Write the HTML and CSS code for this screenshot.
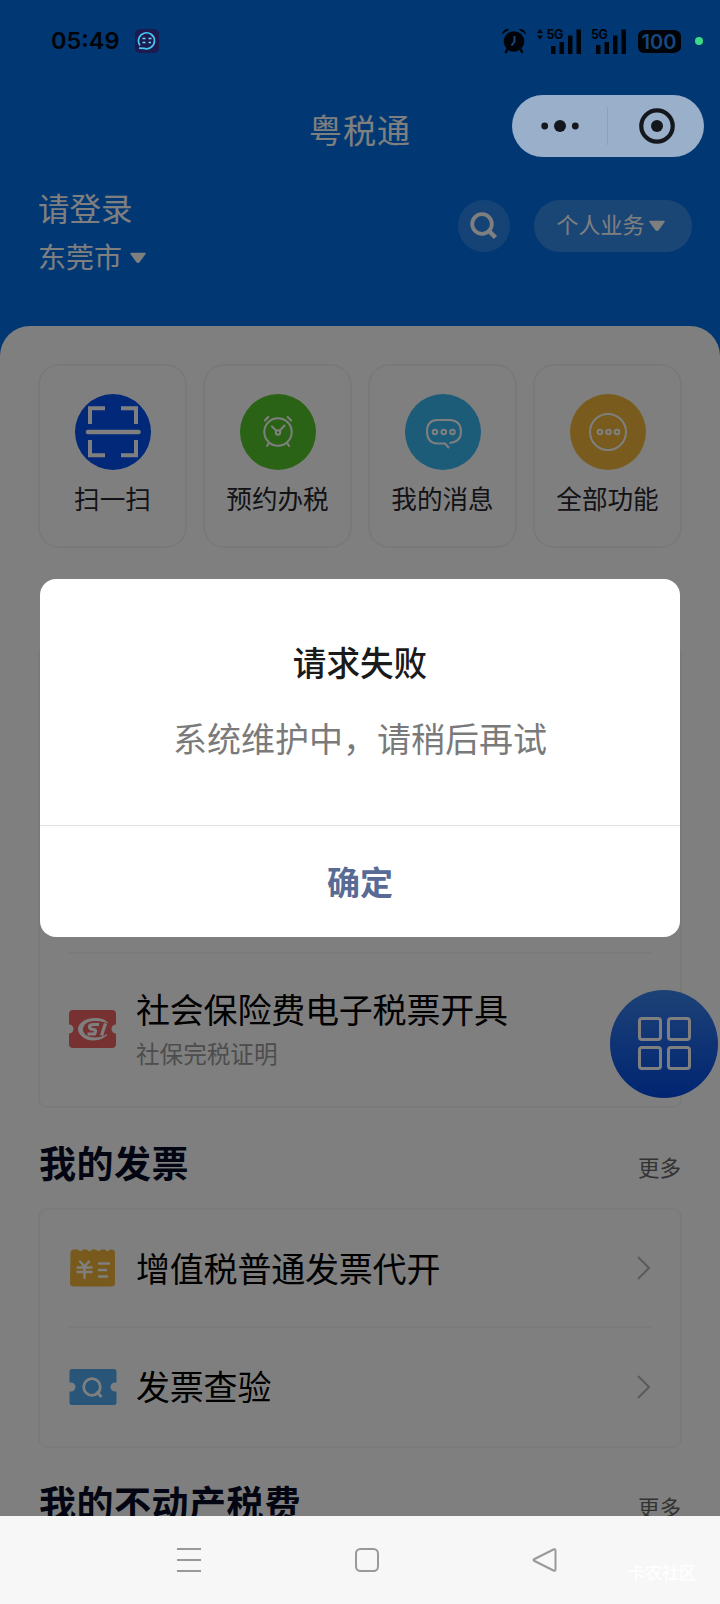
FILE: index.html
```html
<!DOCTYPE html>
<html lang="zh-CN">
<head>
<meta charset="utf-8">
<title>粤税通</title>
<link rel="stylesheet" href="styles.css">
</head>
<body>
<div class="phone">
  <header class="status">
    <span class="time">05:49</span>
    <svg class="app-badge" width="24" height="24" viewBox="0 0 24 24"><rect width="24" height="24" rx="5" fill="#1c1a4e"/><path d="M5 16.500A8 8 0 1 1 9 19.400L4 19.200" fill="none" stroke="#43c6f5" stroke-width="1.700"/><path d="M7.500 9.500h3M13.500 9.500h3M7.500 13.500h3M13.500 13.500h2.500" stroke="#6fd8f8" stroke-width="1.600"/></svg>
    <div class="status-right">
      <svg class="alarm" width="24" height="26" viewBox="0 0 24 26"><circle cx="12" cy="13.500" r="10.300"/><path d="M0.500 5.500Q2 1 6.500 1.500zM23.500 5.500Q22 1 17.500 1.500z" stroke="#000409" stroke-width="1"/><path d="M5.500 21l-2 4M18.500 21l2 4" stroke="#000409" stroke-width="2.400"/><path d="M12.500 8v5.500l-3 4" fill="none" stroke="#174980" stroke-width="2"/></svg>
      <svg class="signal-a" width="46" height="26" viewBox="0 0 46 26"><path d="M0 5L3 1l3 4zM0 7.500l3 4 3-4z"/><path d="M14 18h4.500v8H14zM22.500 14h4.500v12h-4.500zM31 7.500h4.500V26H31zM39.500 1.500H44V26h-4.500z"/><text x="9.500" y="10.500">5G</text></svg>
      <svg class="signal-b" width="36" height="26" viewBox="0 0 36 26"><path d="M5 17h4.500v9H5zM13.500 14H18v12h-4.500zM22 7.500h4.500V26H22zM30.500 1.500H35V26h-4.500z"/><text x="0" y="10.500">5G</text></svg>
      <div class="battery">100</div>
      <i class="dot"></i>
    </div>
  </header>

  <h1 class="title">粤税通</h1>

  <section class="account">
    <div class="who">
      <div class="login">请登录</div>
      <div class="city">东莞市<svg width="18" height="12" viewBox="0 0 18 12"><path d="M2 1.500h14L10 9.800q-1 1-2 0z" fill="#fff" stroke="#fff" stroke-width="1.500" stroke-linejoin="round"/></svg></div>
    </div>
    <div class="search"><svg width="28" height="28" viewBox="0 0 28 28" fill="none" stroke="#fff"><circle cx="12" cy="12" r="9.800" stroke-width="3.800"/><path d="M18.500 18.500l7 7" stroke-width="4.500"/></svg></div>
    <div class="mode"><span>个人业务</span><svg width="18" height="12" viewBox="0 0 18 12"><path d="M2 1.500h14L10 9.800q-1 1-2 0z" fill="#fff" stroke="#fff" stroke-width="1.500" stroke-linejoin="round"/></svg></div>
  </section>

  <main class="sheet">
    <div class="tiles">
      <div class="tile"><svg width="76" height="76" viewBox="0 0 76 76"><circle cx="38" cy="38" r="38" fill="#0450f2"/><path d="M15 30V14.200h15M46 14.200h15V30M15 46v15.300h15M46 61.300h15V46" fill="none" stroke="#fff" stroke-width="4"/><path d="M13 38h50.500" stroke="#fff" stroke-width="4.500" stroke-linecap="round"/></svg><span>扫一扫</span></div>
      <div class="tile"><svg width="76" height="76" viewBox="0 0 76 76" fill="none" stroke="#fff" stroke-width="2" stroke-linecap="round"><circle cx="38" cy="38" r="38" fill="#54c62a" stroke="none"/><circle cx="38" cy="38" r="13.700"/><circle cx="38" cy="38.500" r="2.200"/><path d="M32 32.500l4.500 4.500M44.500 31.500l-5 5.500M28.500 49.500l-1.500 2.500M47.500 49.500l1.500 2.500M24.800 26.500l3.500-3.500M51.200 26.500l-3.500-3.500"/></svg><span>预约办税</span></div>
      <div class="tile"><svg width="76" height="76" viewBox="0 0 76 76" fill="none" stroke="#fff" stroke-width="2"><circle cx="38" cy="38" r="38" fill="#38b8f2" stroke="none"/><path d="M44.500 49Q56 48 56 37.500T45.500 26h-13Q22 26 22 37.500T32.500 49.500H40l4 4.500" stroke-linejoin="round"/><g stroke-width="2"><circle cx="30" cy="38" r="2.300"/><circle cx="38.800" cy="38" r="2.300"/><circle cx="47.500" cy="38" r="2.300"/></g></svg><span>我的消息</span></div>
      <div class="tile"><svg width="76" height="76" viewBox="0 0 76 76" fill="none" stroke="#fff" stroke-width="2"><circle cx="38" cy="38" r="38" fill="#f2b93a" stroke="none"/><circle cx="38" cy="38" r="18"/><g stroke-width="2"><circle cx="30" cy="38" r="2.300"/><circle cx="38.500" cy="38" r="2.300"/><circle cx="47" cy="38" r="2.300"/></g></svg><span>全部功能</span></div>
    </div>

    <div class="card tax-card">
      <div class="row tall">
        <svg class="row-icon" width="48" height="38" viewBox="0 0 48 38"><path d="M4 0h39q4 0 4 4v10.500a4.500 4.500 0 0 0 0 9V34q0 4-4 4H4q-4 0-4-4V23.500a4.500 4.500 0 0 0 0-9V4q0-4 4-4z" fill="#ee6262"/><path d="M38.500 13C36 9.500 31 8.500 26 8.500c-9 0-16.500 4.500-16.500 10.500s6.500 11 14.500 11c6 0 11-2 14-5.500-3 2-7 3.500-12 3.500-7 0-12.500-3.500-12.500-8.500s5-9 12-9c5 0 9 .5 13 2.500z" fill="#fff" stroke="#fff"/><path d="M30 14.500h-5q-5 0-4.500 2.500t4 2.500 1 4.500h-7M36.500 13.500L32.500 25.500" fill="none" stroke="#fff" stroke-width="3.200"/></svg>
        <div class="row-text"><div class="name">社会保险费电子税票开具</div><div class="sub">社保完税证明</div></div>
      </div>
    </div>

    <div class="section-head"><h2>我的发票</h2><span>更多</span></div>
    <div class="card">
      <div class="row first">
        <svg class="row-icon" width="48" height="38" viewBox="0 0 48 38"><path d="M1.500 4q0-3.500 3.500-3.500h4q2 3.500 5 0h4q2.500 3.500 5 0h4q2.500 3.500 5 0h4q2.500 3.500 5 0h1.500q3.500 0 3.500 3.500v30q0 3.500-3.500 3.500h-38q-3.500 0-3.500-3.500z" fill="#eeb438"/><path d="M11 12.500l4.500 5 4.500-5M8.500 18.500h14M8.500 23h14M15.500 18v11M30 14.500h10M30 21h7M30 27.500h8" fill="none" stroke="#fff" stroke-width="2.400" stroke-linecap="round"/></svg>
        <div class="name">增值税普通发票代开</div>
        <svg class="chev" width="14" height="24" viewBox="0 0 14 24"><path d="M1 1l11 11L1 23"/></svg>
      </div>
      <div class="row second">
        <svg class="row-icon" width="48" height="38" viewBox="0 0 48 38"><path d="M3 1h42q2.500 0 2.500 2.500v11h-1.500a4.500 4.500 0 0 0 0 9h1.500V34.500q0 2.500-2.500 2.500H3q-2.500 0-2.500-2.500V23.500H2a4.500 4.500 0 0 0 0-9H.5v-11Q.5 1 3 1z" fill="#50aaf0"/><circle cx="23" cy="19" r="8.300" fill="none" stroke="#fff" stroke-width="2.800"/><path d="M27.500 23.500l5 5.500" stroke="#fff" stroke-width="3"/></svg>
        <div class="name">发票查验</div>
        <svg class="chev" width="14" height="24" viewBox="0 0 14 24"><path d="M1 1l11 11L1 23"/></svg>
      </div>
    </div>

    <div class="section-head last"><h2>我的不动产税费</h2><span>更多</span></div>
  </main>

  <nav class="nav">
    <svg width="24" height="26" viewBox="0 0 24 26"><path d="M0 2h24M0 13h24M0 24h24"/></svg>
    <svg width="26" height="26" viewBox="0 0 26 26"><rect x="2" y="2" width="22" height="22" rx="4.500"/></svg>
    <svg width="26" height="26" viewBox="0 0 26 26"><path d="M21.500 2.500Q23.500 1.500 23.500 4v18q0 2.500-2 1.500L2.500 14q-2-1 0-2z"/></svg>
    <span class="watermark">卡农社区</span>
  </nav>

  <div class="fab"><i></i><i></i><i></i><i></i></div>
  <div class="mask"></div>
  <div class="capsule">
    <svg width="38" height="14" viewBox="0 0 38 14"><circle cx="3.700" cy="7" r="3.400"/><circle cx="19" cy="7" r="6"/><circle cx="34.300" cy="7" r="3.400"/></svg>
    <b></b>
    <svg width="36" height="36" viewBox="0 0 36 36"><circle cx="18" cy="18" r="15.700" fill="none" stroke="#14171c" stroke-width="4.200"/><circle cx="18" cy="18" r="6"/></svg>
  </div>
  <div class="modal" role="dialog">
    <div class="modal-body"><h3>请求失败</h3><p>系统维护中，请稍后再试</p></div>
    <button class="ok">确定</button>
  </div>
</div>
</body>
</html>
```

FILE: styles.css
```css
* { box-sizing: border-box; }
body, h1, h2, h3, p { margin: 0; }
body { font-family: "Noto Sans CJK SC", sans-serif; }
svg { display: block; flex: none; }
.phone {
  position: relative;
  display: flex;
  flex-direction: column;
  width: 720px;
  height: 1604px;
  overflow: hidden;
  background: #0270e8;
}

/* status bar */
.status {
  position: relative;
  z-index: 3;
  height: 82px;
  padding: 0 17px 0 51px;
  display: flex;
  align-items: center;
  color: #000409;
  fill: #000409;
}
.time { font: 600 23.500px/24px Inter, sans-serif; width: 84px; }
.status-right { margin-left: auto; display: flex; align-items: center; }
.status text { font: 700 12.500px Inter, sans-serif; letter-spacing: -.5px; }
.signal-a { margin-left: 11px; }
.signal-b { margin-left: 8px; }
.battery {
  width: 42px;
  height: 23px;
  margin-left: 11px;
  border-radius: 6px;
  background: #000409;
  box-shadow: 2px 0 0 -1px #000409;
  color: #174980;
  font: 600 20px/24px Inter, sans-serif;
  text-align: center;
}
.dot { width: 8px; height: 8px; margin-left: 15px; border-radius: 50%; background: #3ddc84; }

.title {
  height: 94px;
  padding-top: 22px;
  font-size: 33px;
  line-height: 50px;
  font-weight: 400;
  letter-spacing: 1px;
  text-align: center;
  color: #fff;
}

/* account */
.account { height: 150px; padding: 7px 28px 0 38px; display: flex; align-items: flex-start; color: #fff; }
.who { flex: 1; }
.login { font-size: 31.500px; line-height: 48px; }
.city { display: flex; align-items: center; gap: 7px; padding-top: 2px; font-size: 28px; line-height: 46px; }
.city svg { margin-top: 3px; }
.search { display: flex; align-items: center; justify-content: center; width: 52px; height: 52px; margin: 17px 24px 0 0; border-radius: 50%; background: rgba(255,255,255,.16); }
.mode { display: flex; align-items: center; justify-content: center; gap: 3px; width: 158px; height: 52px; margin-top: 17px; padding-right: 4px; border-radius: 26px; background: rgba(255,255,255,.2); font-size: 22px; line-height: 32px; }
.mode span { padding-bottom: 6px; }

/* content sheet */
.sheet { flex: 1; min-height: 0; overflow: hidden; padding: 38px 38px 0; border-radius: 30px 30px 0 0; background: #fff; }
.tiles { display: grid; grid-template-columns: repeat(4, 1fr); gap: 16px; }
.tile { height: 184px; padding-top: 28px; display: flex; flex-direction: column; align-items: center; border: 2px solid #f2f2f2; border-radius: 21px; color: #26262e; font-size: 25.600px; line-height: 38px; white-space: nowrap; }
.tile span { margin-top: 9px; }
.card { border: 2px solid #f4f4f4; border-radius: 9px; padding: 0 29px; }
.tax-card { height: 463px; margin-top: 97px; padding-top: 305px; }
.row { display: flex; align-items: center; height: 118px; }
.row.tall { height: 154px; padding-bottom: 3px; border-top: 2px solid #f4f4f4; }
.row.first { border-bottom: 2px solid #f4f4f4; }
.row.second { padding-bottom: 1px; }
.row.second .name { padding-bottom: 2px; }
.row-icon { margin-right: 19px; }
.name { flex: 1; font-size: 34px; line-height: 46px; color: #000; letter-spacing: -.2px; }
.sub { padding-top: 2px; font-size: 23.600px; line-height: 38px; color: #9a9a9a; }
.chev { fill: none; stroke: #b4b4b4; stroke-width: 2; }
.section-head { display: flex; align-items: center; justify-content: space-between; height: 100px; padding: 8px 1px 0; }
.section-head h2 { font-size: 37px; line-height: 54px; letter-spacing: .5px; color: #060c24; }
.section-head span { padding-top: 8px; font-size: 21.500px; color: #666; }

/* system navigation */
.nav { position: relative; z-index: 3; height: 88px; background: #f7f7f7; display: flex; align-items: center; padding-left: 177px; gap: 153px; fill: none; stroke: #999; stroke-width: 2; }
.nav svg + svg + svg { margin-left: -1px; }
.watermark { position: absolute; right: 24px; bottom: 19px; font-size: 17px; line-height: 26px; font-weight: 500; color: #fff; }

/* floating layers */
.fab { position: absolute; left: 610px; top: 990px; width: 108px; height: 108px; padding: 27px 28px; border-radius: 50%; display: grid; grid-template-columns: 24px 24px; grid-template-rows: 24px 24px; gap: 5px; background: linear-gradient(#3a84ee, #024ae4); }
.fab i { border: 3px solid #fff; border-radius: 4px; }
.mask { position: absolute; inset: 0; background: rgba(0,0,0,.5); }
.capsule { position: absolute; left: 511.500px; top: 94.500px; width: 192px; height: 62.500px; border-radius: 32px; background: #9ab0ca; display: flex; align-items: center; padding-left: 29px; fill: #14171c; }
.capsule b { width: 1px; height: 38px; margin: 0 31px 0 28px; background: #8aa0bc; }
.modal { position: absolute; left: 40px; top: 579px; width: 640px; height: 358px; border-radius: 16px; overflow: hidden; background: #fff; display: flex; flex-direction: column; text-align: center; }
.modal-body { height: 247px; padding-top: 58px; border-bottom: 1px solid #e2e2e2; }
.modal h3 { font-size: 33.600px; line-height: 50px; font-weight: 500; color: #1a1a1a; }
.modal p { margin-top: 26px; font-size: 34px; line-height: 50px; color: #7a7a7a; }
.ok { flex: 1; border: 0; padding: 0 0 2px; background: none; font: 700 33px "Noto Sans CJK SC", sans-serif; color: #576b95; }
```
